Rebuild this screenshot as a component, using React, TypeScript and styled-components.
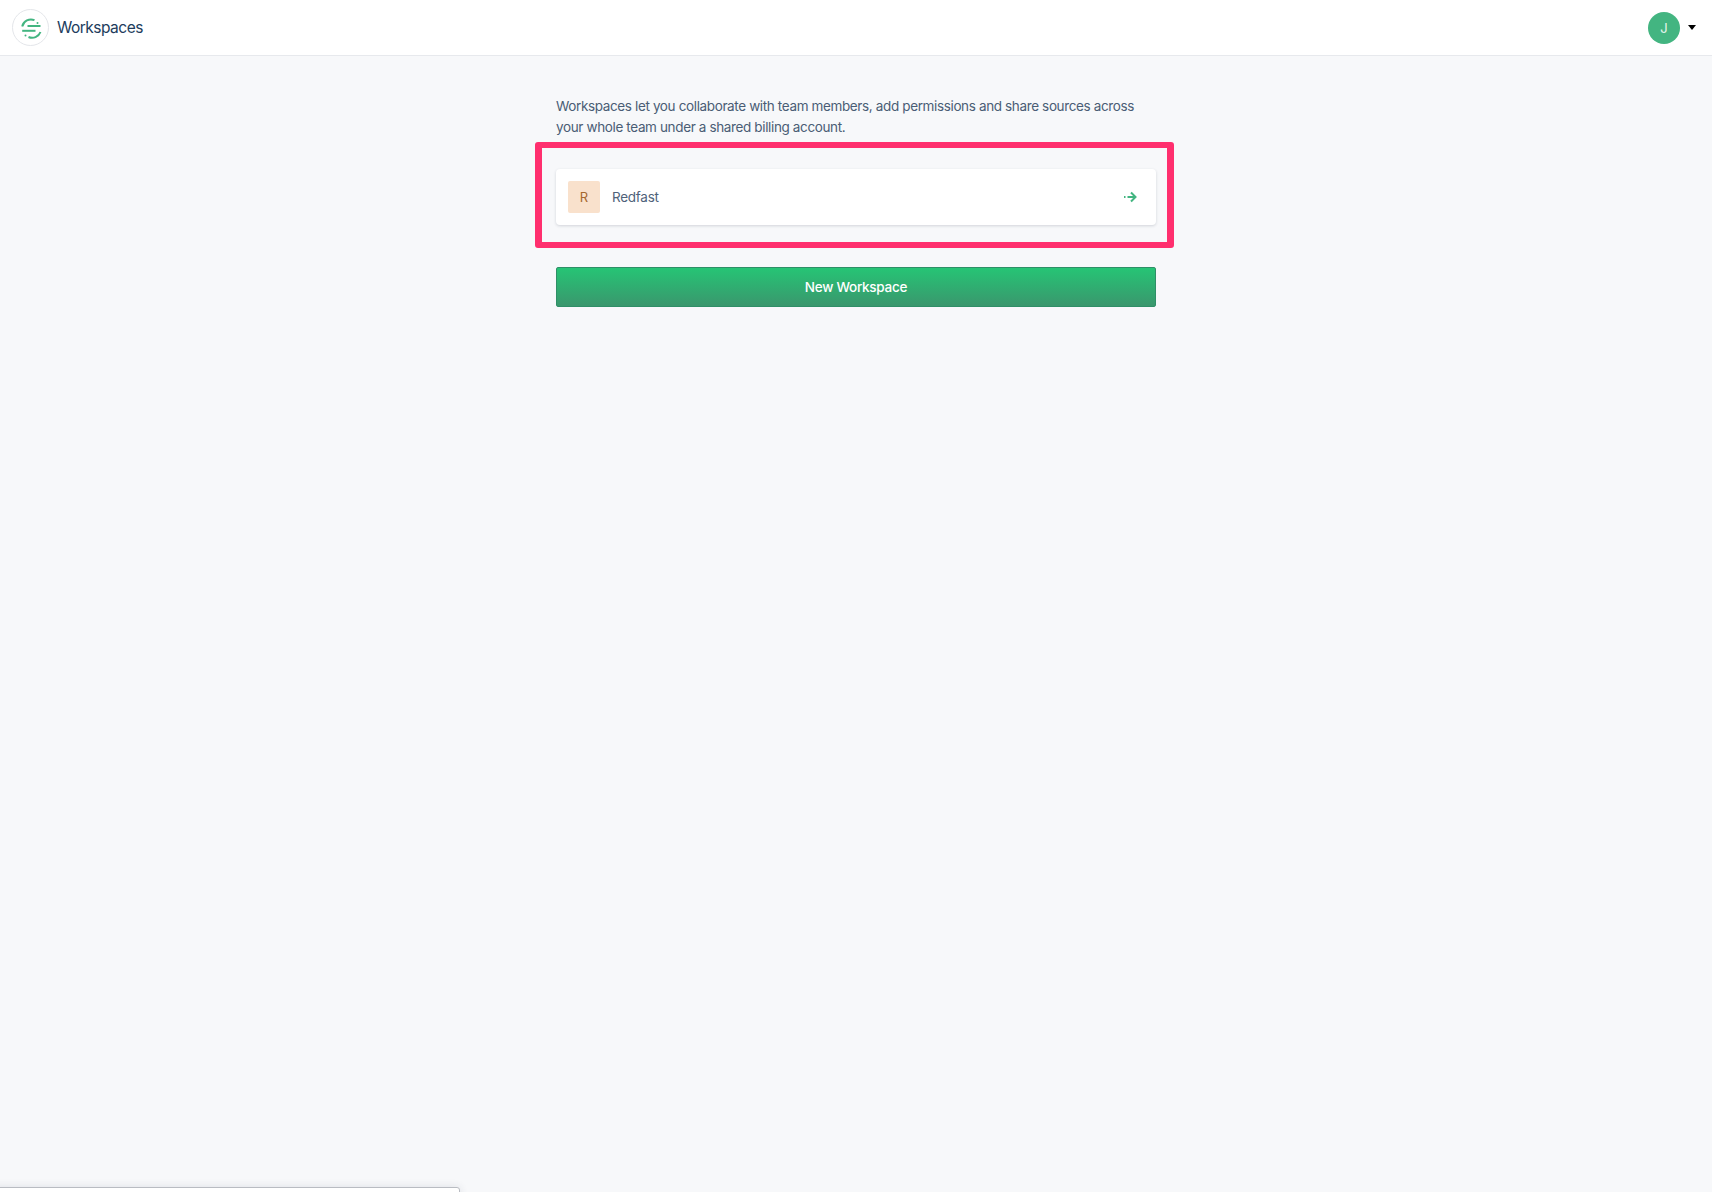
import { createGlobalStyle } from "styled-components";
import styled from "styled-components";

const GlobalStyle = createGlobalStyle`
  html, body {
    margin: 0;
    padding: 0;
    height: 100%;
    overflow: hidden;
    background-color: #f7f8fa;
    font-family: Inter, "Liberation Sans", sans-serif;
  }
`;

const Page = styled.div`
  min-height: 1192px;
  background-color: #f7f8fa;
`;

const Header = styled.header`
  display: flex;
  align-items: center;
  justify-content: space-between;
  height: 55px;
  padding: 0 16px 0 12px;
  background-color: #fff;
  border-bottom: 1px solid #e7e9ed;
`;

const Brand = styled.div`
  display: flex;
  align-items: center;
  gap: 8px;
`;

const LogoBadge = styled.div`
  display: flex;
  align-items: center;
  justify-content: center;
  width: 35px;
  height: 35px;
  border: 1px solid #e4e6ea;
  border-radius: 50%;
`;

const Title = styled.h1`
  margin: 0;
  font-size: 15.5px;
  font-weight: 400;
  line-height: 20px;
  letter-spacing: -0.033em;
  color: #213c5c;
`;

const UserMenu = styled.div`
  display: flex;
  align-items: center;
  gap: 8px;
`;

const Avatar = styled.div`
  display: flex;
  align-items: center;
  justify-content: center;
  width: 32px;
  height: 32px;
  border-radius: 50%;
  background-color: #43b581;
  color: #e6f5ee;
  font-size: 13px;
`;

const Caret = styled.span`
  width: 0;
  height: 0;
  border-left: 4px solid transparent;
  border-right: 4px solid transparent;
  border-top: 5px solid #000;
`;

const Main = styled.main`
  display: flex;
  flex-direction: column;
  width: 600px;
  margin: 0 auto;
  padding-top: 40px;
`;

const Intro = styled.p`
  margin: 0 0 31px;
  font-size: 13.5px;
  line-height: 21px;
  letter-spacing: -0.027em;
  color: #4a5d75;
`;

const CardSlot = styled.div`
  position: relative;
  margin-bottom: 42px;
`;

const Highlight = styled.div`
  position: absolute;
  top: -27px;
  right: -18px;
  bottom: -23px;
  left: -21px;
  border-style: solid;
  border-color: #ff2f6e;
  border-width: 6px 7px;
  border-radius: 3px;
  pointer-events: none;
`;

const WorkspaceCard = styled.a`
  display: flex;
  align-items: center;
  gap: 12px;
  height: 56px;
  padding: 0 19px 0 12px;
  box-sizing: border-box;
  background-color: #fff;
  border-radius: 4px;
  box-shadow: 0 1px 3px rgba(40, 50, 70, 0.18);
`;

const Initial = styled.div`
  display: flex;
  align-items: center;
  justify-content: center;
  width: 32px;
  height: 32px;
  border-radius: 2px;
  background-color: #f9e1cc;
  color: #a5682f;
  font-size: 13px;
`;

const WorkspaceName = styled.span`
  flex: 1;
  font-size: 13.5px;
  letter-spacing: -0.02em;
  color: #4f627a;
`;

const NewButton = styled.button`
  height: 40px;
  width: 100%;
  border: 1px solid #2f8f67;
  border-radius: 2px;
  background: linear-gradient(180deg, #26c475 0%, #3a976d 100%);
  color: #fff;
  font-family: inherit;
  font-size: 13.5px;
  font-weight: 500;
  letter-spacing: -0.02em;
  cursor: pointer;
`;

const ClippedPanel = styled.div`
  position: fixed;
  left: -8px;
  bottom: -40px;
  width: 468px;
  height: 45px;
  box-sizing: border-box;
  background-color: #fff;
  border: 1px solid #b9bcc2;
  border-radius: 3px;
  box-shadow: 0 0 8px rgba(40, 50, 70, 0.12);
`;

function Logo() {
  return (
    <svg width="22" height="22" viewBox="0 0 22 22" fill="none" stroke="#43b581" strokeWidth="2">
      <path d="M2.2 9.5A9 9 0 0 1 14.5 3.2" />
      <path d="M7.5 9H20.5" />
      <path d="M2.2 13.8H15.5" />
      <path d="M20.5 15A9 9 0 0 1 8.5 20" />
      <circle cx="17.5" cy="6" r="1" fill="#43b581" stroke="none" />
      <circle cx="5.5" cy="18.5" r="1" fill="#43b581" stroke="none" />
    </svg>
  );
}

function ArrowIcon() {
  return (
    <svg width="13" height="12" viewBox="0 0 13 12" fill="none" stroke="#43b581" strokeWidth="2">
      <path d="M0 6H1.5" />
      <path d="M3.5 6H11" />
      <path d="M7 1.5L11.5 6L7 10.5" />
    </svg>
  );
}

export default function App() {
  return (
    <Page>
      <GlobalStyle />
      <Header>
        <Brand>
          <LogoBadge>
            <Logo />
          </LogoBadge>
          <Title>Workspaces</Title>
        </Brand>
        <UserMenu>
          <Avatar>J</Avatar>
          <Caret />
        </UserMenu>
      </Header>
      <Main>
        <Intro>
          Workspaces let you collaborate with team members, add permissions and share sources across
          your whole team under a shared billing account.
        </Intro>
        <CardSlot>
          <WorkspaceCard>
            <Initial>R</Initial>
            <WorkspaceName>Redfast</WorkspaceName>
            <ArrowIcon />
          </WorkspaceCard>
          <Highlight />
        </CardSlot>
        <NewButton>New Workspace</NewButton>
      </Main>
      <ClippedPanel />
    </Page>
  );
}
